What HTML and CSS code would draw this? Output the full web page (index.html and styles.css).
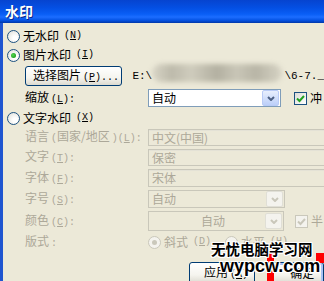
FILE: index.html
```html
<!DOCTYPE html>
<html lang="zh-CN">
<head>
    <meta charset="UTF-8">
    <title>水印</title>
    <link rel="stylesheet" href="styles.css">
</head>
<body>
    <div class="window">
        <div class="titlebar">水印</div>
        <div class="content">
            <div class="opt r1"><span class="radio"></span>无水印<span class="key">(<u>N</u>)</span></div>
            <div class="opt r2"><span class="radio checked"></span>图片水印<span class="key">(<u>I</u>)</span></div>
            <div class="picrow">
                <button class="btn">选择图片<span class="key">(<u>P</u>)...</span></button>
                <span class="path">E:\</span>
                <span class="smudge"></span>
                <span class="path">\6-7._</span>
            </div>
            <div class="scalerow">
                <span class="label">缩放<span class="key">(<u>L</u>):</span></span>
                <div class="select">
                    <span class="value">自动</span>
                    <span class="arrow"><svg width="8" height="5" viewBox="0 0 8 5"><polyline points="1,1 4,4 7,1" fill="none" stroke="#4d6185" stroke-width="2"/></svg></span>
                </div>
                <span class="check on"><svg width="11" height="11" viewBox="0 0 11 11"><polyline points="2,5.5 4.5,8 9,3" fill="none" stroke="#21a121" stroke-width="2"/></svg></span>
                <span>冲</span>
            </div>
            <div class="opt r5"><span class="radio"></span>文字水印<span class="key">(<u>X</u>)</span></div>

            <div class="fields">
                <span class="label off">语言<span class="key">(</span>国家/地区<span class="key">)(<u>L</u>):</span></span>
                <div class="field h17">中文(中国)</div>

                <span class="label off">文字<span class="key">(<u>T</u>):</span></span>
                <div class="field h17">保密</div>

                <span class="label off">字体<span class="key">(<u>F</u>):</span></span>
                <div class="field">宋体</div>

                <span class="label off">字号<span class="key">(<u>S</u>):</span></span>
                <div class="select dim">
                    <span class="value">自动</span>
                    <span class="arrow"><svg width="8" height="5" viewBox="0 0 8 5"><polyline points="1,1 4,4 7,1" fill="none" stroke="#c9c7ba" stroke-width="2"/></svg></span>
                </div>

                <span class="label off">颜色<span class="key">(<u>C</u>):</span></span>
                <div class="colorrow">
                    <div class="select dim color">
                        <span class="value">自动</span>
                        <span class="arrow"><svg width="8" height="5" viewBox="0 0 8 5"><polyline points="1,1 4,4 7,1" fill="none" stroke="#c9c7ba" stroke-width="2"/></svg></span>
                    </div>
                    <span class="check dim"><svg width="11" height="11" viewBox="0 0 11 11"><polyline points="2,5.5 4.5,8 9,3" fill="none" stroke="#c9c7ba" stroke-width="2"/></svg></span>
                    <span class="off">半</span>
                </div>

                <span class="label off">版式<span class="key">:</span></span>
                <div class="layout off">
                    <span class="opt"><span class="radio dim checked"></span>斜式<span class="key">(<u>D</u>)</span></span>
                    <span class="opt"><span class="radio dim"></span>水平<span class="key">(<u>H</u>)</span></span>
                </div>
            </div>

            <div class="actions">
                <button class="btn act">应用<span class="key">(<u>A</u>)</span></button>
                <button class="btn act default">确定</button>
            </div>
        </div>

        <div class="stamp">
            <span class="bar"></span>
            <span class="bar right"></span>
            <div class="site">无忧电脑学习网</div>
            <div class="url">wypcw.com</div>
        </div>
    </div>
</body>
</html>
```

FILE: styles.css
```css
body {
    margin: 0;
    font-family: "Noto Sans CJK SC", sans-serif;
    font-size: 12px;
    line-height: 16px;
    color: #000;
    background: #ece9d8;
}
u {
    text-decoration: underline;
}
.key {
    font-family: "Liberation Mono", monospace;
    font-size: 10px;
    margin-left: 2px;
}
.window {
    position: relative;
    width: 324px;
    height: 281px;
    overflow: hidden;
}
.titlebar {
    height: 23px;
    box-sizing: border-box;
    padding: 0 0 1px 5px;
    display: flex;
    align-items: center;
    color: #fff;
    font-weight: bold;
    font-size: 14px;
    text-shadow: 1px 1px #0b2a8c;
    background: linear-gradient(#0644cf 0%, #0450e4 35%, #0a5ff6 62%, #1c6dff 74%, #0553e4 88%, #0036a8 100%);
}
.content {
    height: 258px;
    box-sizing: border-box;
    border-left: 3px solid #1f55d0;
    padding: 4px 0 0 4px;
    white-space: nowrap;
}
.opt {
    display: flex;
    align-items: center;
    gap: 3px;
}
.r1 { height: 18px; }
.r2 { height: 20px; }
.r5 { height: 18px; margin-top: 1px; }
.radio {
    width: 11px;
    height: 11px;
    border: 1px solid #1c5180;
    border-radius: 50%;
    background: radial-gradient(circle at 65% 65%, #fff 20%, #dcdcd6 100%);
    display: flex;
    align-items: center;
    justify-content: center;
}
.radio.checked::after {
    content: "";
    width: 5px;
    height: 5px;
    border-radius: 50%;
    background: radial-gradient(circle at 40% 40%, #55d751, #21a121 70%);
}
.radio.dim {
    border-color: #cac8bb;
    background: #f4f3ee;
}
.radio.dim.checked::after {
    background: #cac8bb;
}
.picrow {
    height: 20px;
    margin: 1px 0 0 18px;
    display: flex;
    align-items: center;
}
.btn {
    font: inherit;
    color: #000;
    height: 20px;
    padding: 0 0 0 7px;
    text-align: left;
    white-space: nowrap;
    border: 1px solid #003c74;
    border-radius: 3px;
    background: linear-gradient(#fff 0%, #f5f4ee 60%, #dcdad0 100%);
}
.picrow .btn {
    width: 100px;
}
.path {
    font-family: "Liberation Mono", monospace;
    font-size: 11px;
}
.picrow .path:first-of-type {
    margin-left: 10px;
}
.smudge {
    width: 134px;
    height: 18px;
    margin: -6px 2px 0 0;
    border-radius: 9px;
    background: linear-gradient(90deg, #d8d5c6, #bdbaab 15%, #cfccbd 30%, #b3b0a1 50%, #c9c6b7 65%, #b8b5a6 80%, #d6d3c4);
    filter: blur(2.5px);
}
.scalerow {
    height: 20px;
    margin: 2px 0 0 18px;
    display: flex;
    align-items: center;
}
.label {
    width: 123px;
}
.off {
    color: #aca899;
}
.select {
    width: 133px;
    height: 18px;
    box-sizing: border-box;
    border: 1px solid #7f9db9;
    background: #fff;
    display: flex;
    align-items: center;
}
.select .value {
    flex: 1;
    padding-left: 3px;
}
.select .arrow {
    width: 15px;
    height: 14px;
    margin-right: 1px;
    border: 1px solid #b9cbf6;
    border-radius: 2px;
    background: linear-gradient(#e8effd, #bccff9);
    display: flex;
    align-items: center;
    justify-content: center;
}
.select.dim {
    width: 137px;
    border-color: #c9c7ba;
    background: #ece9d8;
    color: #aca899;
}
.select.dim .arrow {
    border-color: #e0dfd6;
    background: #f4f3ee;
}
.select.color {
    width: 136px;
    height: 20px;
}
.select.color .value {
    text-align: center;
    padding-left: 12px;
}
.check {
    width: 11px;
    height: 11px;
    border: 1px solid #1c5180;
    background: linear-gradient(135deg, #dcdcd6, #fff);
    margin: 0 3px 0 13px;
    display: flex;
}
.check.dim {
    border-color: #cac8bb;
    background: #f4f3ee;
    margin-left: 11px;
}
.fields {
    margin: 2px 0 0 18px;
    display: grid;
    grid-template-columns: 123px auto;
    grid-template-rows: 17px 17px 18px 18px 20px 16px;
    row-gap: 3px;
    align-items: center;
}
.field {
    height: 18px;
    box-sizing: border-box;
    width: 190px;
    border: 1px solid #c9c7ba;
    box-shadow: inset 0 1px #e4e2d6;
    padding-left: 3px;
    color: #aca899;
    display: flex;
    align-items: center;
}
.field.h17 {
    height: 17px;
}
.colorrow {
    display: flex;
    align-items: center;
}
.layout {
    display: flex;
    gap: 14px;
}
.actions {
    margin: 12px 0 0 182px;
    display: flex;
    gap: 13px;
}
.btn.act {
    width: 73px;
    height: 22px;
    padding-left: 14px;
}
.btn.default {
    width: 60px;
    padding-left: 21px;
    box-shadow: inset 0 0 0 2px #a9c2f4;
}
.stamp {
    position: absolute;
    left: 211px;
    top: 240px;
    width: 113px;
    height: 41px;
    font-weight: bold;
    color: #000;
    text-shadow: -1px -1px #fff, 1px -1px #fff, -1px 1px #fff, 1px 1px #fff, 0 1px #fff, 0 -1px #fff, 1px 0 #fff, -1px 0 #fff;
}
.bar {
    position: absolute;
    left: 56px;
    top: 13px;
    width: 7px;
    height: 28px;
    background: #f00;
}
.bar.right {
    left: 105px;
    width: 8px;
    height: 10px;
}
.site {
    position: relative;
    font-size: 14.5px;
    line-height: 18px;
}
.url {
    position: relative;
    margin: -1px 0 0 9px;
    font-family: "Liberation Sans", sans-serif;
    font-size: 18px;
    line-height: 19px;
}
```
